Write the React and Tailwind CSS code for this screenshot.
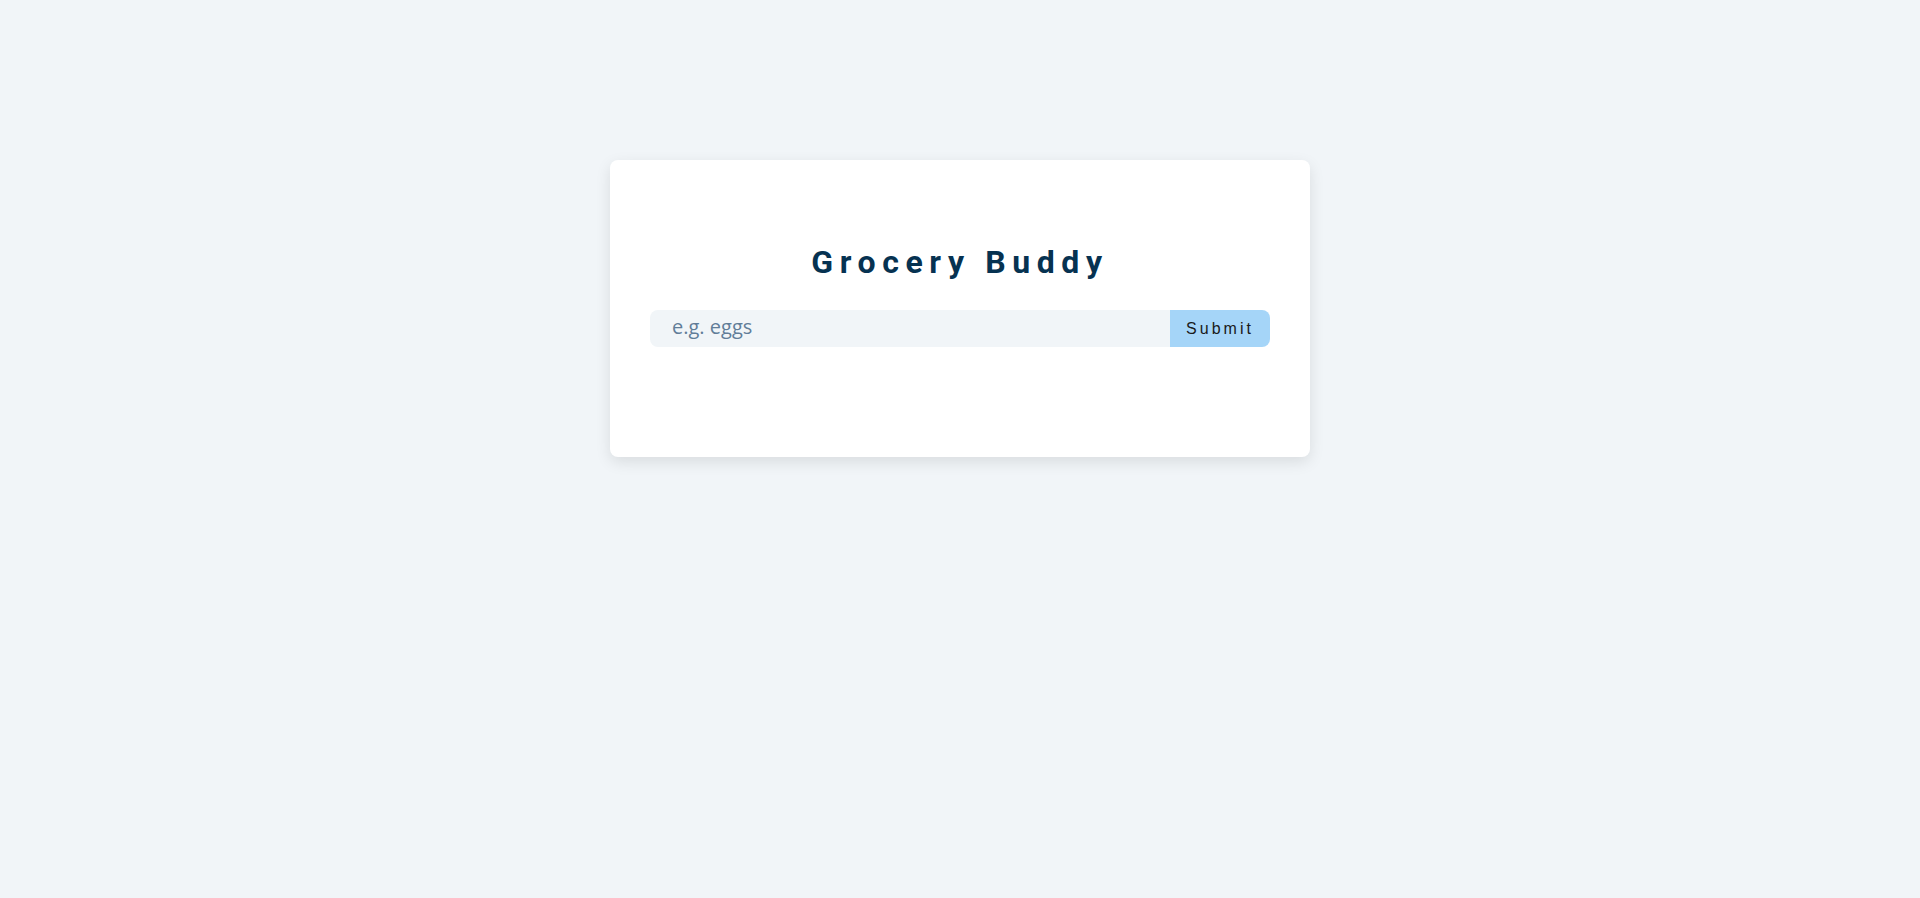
import { useState } from 'react';

export default function App() {
  const [item, setItem] = useState('');

  // Formulário simples: o envio não faz nada por enquanto.
  const handleSubmit = (e) => {
    e.preventDefault();
  };

  return (
    <main className="min-h-screen bg-[#f1f5f8] pt-[160px]">
      <section className="mx-auto w-[700px] bg-white rounded-lg shadow-[0_5px_15px_rgba(0,0,0,0.1)] px-10 pt-[82px] pb-[110px]">
        <form onSubmit={handleSubmit}>
          <h3 className="text-center text-[32px] leading-[40px] font-bold tracking-[6.6px] text-[#063251] mb-[28px] font-['Roboto',sans-serif]">
            Grocery Buddy
          </h3>
          <div className="flex h-[37px]">
            <input
              type="text"
              value={item}
              onChange={(e) => setItem(e.target.value)}
              placeholder="e.g. eggs"
              className="flex-1 min-w-0 bg-[#f1f5f8] rounded-l-lg pl-[22px] pr-4 pb-[3px] text-[20px] text-[#617d98] placeholder:text-[#617d98] outline-none font-['Open_Sans',sans-serif]"
            />
            <button
              type="submit"
              className="w-[100px] bg-[#a5d5f8] rounded-r-lg text-[16px] tracking-[3px] text-[#1a1a1a] font-['Liberation_Sans',Arial,sans-serif] cursor-pointer"
            >
              Submit
            </button>
          </div>
        </form>
      </section>
    </main>
  );
}
